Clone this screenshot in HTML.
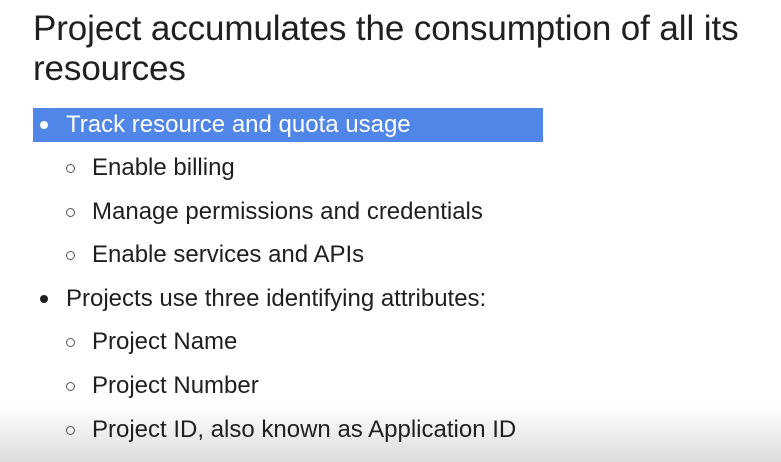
<!DOCTYPE html>
<html><head><style>
body{margin:0;width:781px;height:462px;overflow:hidden;background:#fff;font-family:"Liberation Sans",sans-serif;color:#1f1f1f;position:relative}
.t{position:absolute;left:33px;top:9px;font-size:35px;line-height:40px;color:#202020;letter-spacing:-0.1px;white-space:nowrap}
.hl{position:absolute;left:33px;top:108px;width:510px;height:34px;background:#4f86e8}
.r{position:absolute;font-size:24px;line-height:30px;white-space:nowrap}
.d{position:absolute;width:8px;height:8px;border-radius:50%;background:#1f1f1f}
.c{position:absolute;border-radius:50%;border:1.3px solid #555;box-sizing:border-box;width:9px;height:9px}
.fade{position:absolute;left:0;top:405px;width:781px;height:57px;background:linear-gradient(#fff,#dcdcdc)}
</style></head><body>
<div class="fade"></div>
<div class="t">Project accumulates the consumption of all its<br>resources</div>
<div class="hl"></div>
<div class="d" style="left:40px;top:121px;background:#fff"></div>
<div class="r" style="left:66px;top:110px;color:#fff">Track resource and quota usage</div>
<div class="c" style="left:66px;top:164px"></div><div class="r" style="left:92px;top:153px">Enable billing</div>
<div class="c" style="left:66px;top:208px"></div><div class="r" style="left:92px;top:197px">Manage permissions and credentials</div>
<div class="c" style="left:66px;top:251px"></div><div class="r" style="left:92px;top:240px">Enable services and APIs</div>
<div class="d" style="left:40px;top:295px"></div><div class="r" style="left:66px;top:284px">Projects use three identifying attributes:</div>
<div class="c" style="left:66px;top:338px"></div><div class="r" style="left:92px;top:327px">Project Name</div>
<div class="c" style="left:66px;top:382px"></div><div class="r" style="left:92px;top:371px">Project Number</div>
<div class="c" style="left:66px;top:426px"></div><div class="r" style="left:92px;top:415px">Project ID, also known as Application ID</div>
</body></html>
